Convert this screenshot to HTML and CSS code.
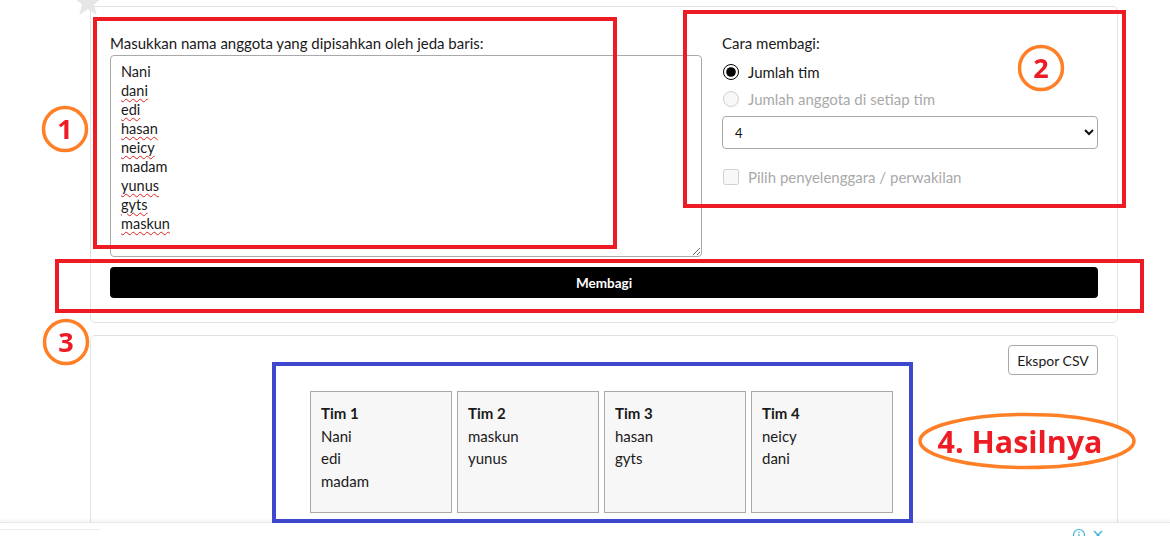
FILE: index.html
```html
<!DOCTYPE html>
<html lang="id">
<head>
<meta charset="utf-8">
<title>Pembagi Tim</title>
<link rel="stylesheet" href="styles.css">
</head>
<body>
<svg class="star" viewBox="0 0 30 30" width="30" height="30" aria-hidden="true">
  <polygon points="15,1 18.8,10.5 29,11 21,17.6 23.7,28 15,22.3 6.3,28 9,17.6 1,11 11.2,10.5" fill="#e6e6e6"/>
</svg>
<main class="page">
  <section class="card card-input">
    <div class="form-row">
      <div class="col-names">
        <label class="field-label">Masukkan nama anggota yang dipisahkan oleh jeda baris:</label>
        <div class="names-box" role="textbox" aria-multiline="true">
          <div>Nani</div>
          <div><span class="sp">dani</span></div>
          <div><span class="sp">edi</span></div>
          <div><span class="sp">hasan</span></div>
          <div><span class="sp">neicy</span></div>
          <div>madam</div>
          <div><span class="sp">yunus</span></div>
          <div><span class="sp">gyts</span></div>
          <div><span class="sp">maskun</span></div>
        </div>
      </div>
      <div class="col-options">
        <div class="field-label">Cara membagi:</div>
        <label class="opt opt-first"><input type="radio" name="mode" checked> <span>Jumlah tim</span></label>
        <label class="opt opt-disabled"><input type="radio" name="mode" disabled> <span>Jumlah anggota di setiap tim</span></label>
        <select class="count-select">
          <option>4</option>
        </select>
        <label class="opt opt-check opt-disabled"><input type="checkbox" disabled> <span>Pilih penyelenggara / perwakilan</span></label>
      </div>
    </div>
    <button class="btn-split">Membagi</button>
  </section>
  <section class="card card-result">
    <div class="result-bar"><button class="btn-export">Ekspor CSV</button></div>
    <div class="teams">
      <div class="team"><div class="team-name">Tim 1</div><div>Nani</div><div>edi</div><div>madam</div></div>
      <div class="team"><div class="team-name">Tim 2</div><div>maskun</div><div>yunus</div></div>
      <div class="team"><div class="team-name">Tim 3</div><div>hasan</div><div>gyts</div></div>
      <div class="team"><div class="team-name">Tim 4</div><div>neicy</div><div>dani</div></div>
    </div>
  </section>
</main>
<div class="ad-bar">
  <div class="ad-line"></div>
  <div class="ad-icons">
    <svg width="14" height="14" viewBox="0 0 14 14" aria-hidden="true"><circle cx="7" cy="7" r="5.5" fill="none" stroke="#3ab0d8" stroke-width="1.2"/><line x1="7" y1="6" x2="7" y2="10" stroke="#3ab0d8" stroke-width="1.2"/><circle cx="7" cy="4.2" r="0.8" fill="#3ab0d8"/></svg>
    <svg width="14" height="14" viewBox="0 0 14 14" aria-hidden="true"><path d="M3 3 L11 11 M11 3 L3 11" stroke="#3ab0d8" stroke-width="1.4"/></svg>
  </div>
</div>
<svg class="annot" width="1170" height="536" viewBox="0 0 1170 536">
  <g fill="none" stroke="#ed1c24" stroke-width="4">
    <rect x="95" y="19" width="520" height="228"/>
    <rect x="685" y="12" width="439" height="194"/>
    <rect x="57" y="261" width="1085" height="50"/>
  </g>
  <rect x="274" y="364" width="637" height="157" fill="none" stroke="#3f48cc" stroke-width="4"/>
  <g fill="#fff" stroke="#ff7f27" stroke-width="3.5">
    <circle cx="65" cy="129" r="21.5"/>
    <circle cx="1041" cy="68" r="21.5"/>
    <circle cx="66" cy="342" r="21.5"/>
    <ellipse cx="1027" cy="441" rx="107" ry="26.5"/>
  </g>
  <g class="annot-text" fill="#ed1c24">
    <text x="65" y="139" text-anchor="middle" font-size="27">1</text>
    <text x="1041" y="78" text-anchor="middle" font-size="27">2</text>
    <text x="66" y="352" text-anchor="middle" font-size="27">3</text>
    <text x="1020" y="453" text-anchor="middle" font-size="31" textLength="165" lengthAdjust="spacingAndGlyphs">4. Hasilnya</text>
  </g>
</svg>
</body>
</html>
```
FILE: styles.css
```css
* { box-sizing: border-box; }

html, body {
  margin: 0;
  height: 536px;
  overflow: hidden;
  background: #fff;
}

body {
  position: relative;
  font-family: Lato, "Open Sans", sans-serif;
  font-size: 14px;
  color: #1a1a1a;
}

.star {
  position: absolute;
  left: 73px;
  top: -13px;
}

.page {
  display: flex;
  flex-direction: column;
  gap: 12px;
  padding: 6px 52px 0 90px;
}

.card {
  border: 1px solid #e2e2e2;
  border-radius: 5px;
  background: #fff;
}

.card-input {
  padding: 26px 19px 24px;
}

.form-row {
  display: grid;
  grid-template-columns: 592px 1fr;
  column-gap: 20px;
}

.field-label {
  display: block;
  line-height: 20px;
  margin-bottom: 2px;
  font-size: 15px;
}

.names-box {
  height: 202px;
  border: 1px solid #a9a9a9;
  border-radius: 4px;
  padding: 6px 10px;
  line-height: 19px;
  font-size: 14.5px;
  overflow: auto;
  resize: vertical;
}

.sp {
  text-decoration: underline wavy #e02020;
  text-decoration-thickness: 1px;
  text-underline-offset: 2px;
}

.col-options {
  display: flex;
  flex-direction: column;
}

.opt {
  display: flex;
  align-items: center;
  gap: 9px;
  height: 20px;
  line-height: 20px;
  font-size: 15px;
}

.opt input {
  margin: 0 0 0 1px;
  width: 16px;
  height: 16px;
  accent-color: #000;
}

.opt-first { margin-top: 7px; }
.opt-disabled { color: #a9a9a9; margin-top: 7px; }
.opt-check { margin-top: 18px; }
.opt-check input { width: 16px; height: 16px; }

.count-select {
  margin-top: 7px;
  height: 33px;
  width: 100%;
  border: 1px solid #a9a9a9;
  border-radius: 4px;
  background: #fff;
  padding: 0 8px;
  font-family: inherit;
  font-size: 13px;
  color: #111;
}

.btn-split {
  display: block;
  width: 100%;
  height: 31px;
  margin-top: 10px;
  border: 0;
  border-radius: 4px;
  background: #000;
  color: #fff;
  font-family: inherit;
  font-weight: 700;
  font-size: 13.5px;
}

.card-result {
  padding: 9px 19px 40px;
}

.result-bar {
  display: flex;
  justify-content: flex-end;
}

.btn-export {
  height: 30px;
  width: 90px;
  padding: 0;
  border: 1px solid #a9a9a9;
  border-radius: 4px;
  background: #fff;
  font-family: inherit;
  font-size: 14px;
  color: #1a1a1a;
}

.teams {
  display: flex;
  justify-content: center;
  gap: 5px;
  margin-top: 16px;
  padding-right: 5px;
}

.team {
  width: 142px;
  height: 122px;
  border: 1px solid #a9a9a9;
  background: #f7f7f7;
  padding: 10px 10px;
  font-size: 15px;
  line-height: 22.5px;
  color: #1a1a1a;
}

.team-name { font-weight: 700; }

.ad-bar {
  position: fixed;
  left: 0;
  right: 0;
  bottom: 0;
  height: 14px;
  background: #fff;
  border-top: 1px solid #e8e8e8;
  box-shadow: 0 -2px 3px rgba(0,0,0,0.05);
}

.ad-line {
  width: 100px;
  height: 1px;
  margin-top: 6px;
  background: #ececec;
}

.ad-icons {
  position: absolute;
  left: 1072px;
  top: 5px;
  display: flex;
  gap: 5px;
}

.annot {
  position: absolute;
  left: 0;
  top: 0;
  pointer-events: none;
}

.annot-text text {
  font-family: "Open Sans", "Liberation Sans", sans-serif;
  font-weight: 700;
}
```
